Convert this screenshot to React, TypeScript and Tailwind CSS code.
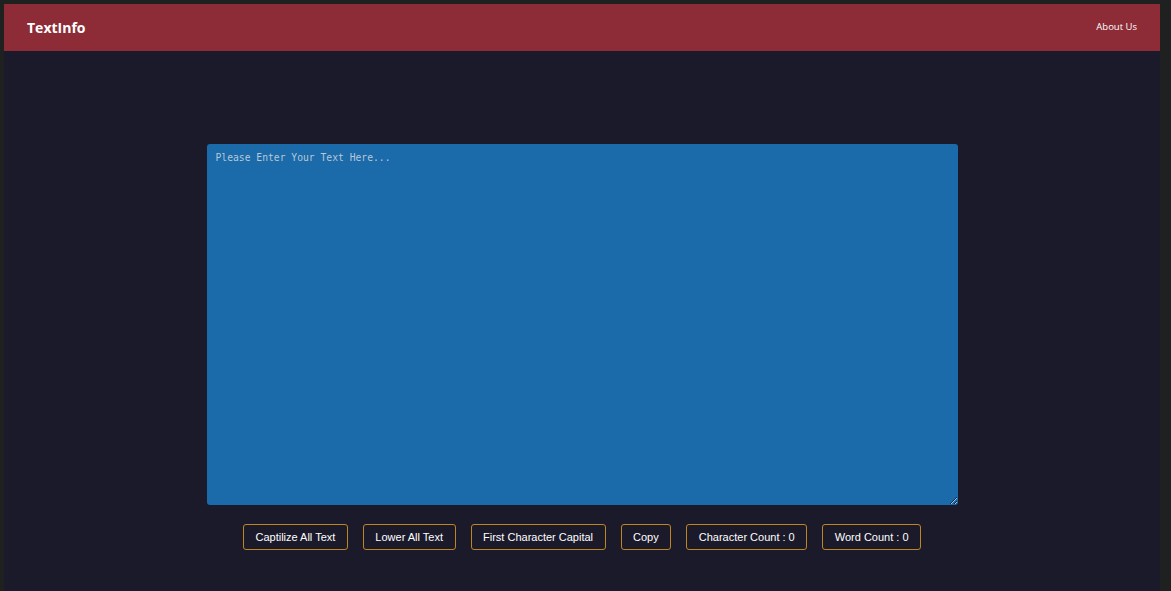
import { useState } from 'react';

export default function App() {
  const [text, setText] = useState('');

  const words = text.split(/\s+/).filter((w) => w.length > 0).length;

  const buttons = [
    'Captilize All Text',
    'Lower All Text',
    'First Character Capital',
    'Copy',
    `Character Count : ${text.length}`,
    `Word Count : ${words}`,
  ];

  return (
    <div className="h-[591px] w-full bg-[#1f2020] pl-[4px] pt-[4px] pr-[11px]">
      <div className="flex h-full flex-col bg-[#1b1a2a]">
        <nav className="flex h-[47px] items-center justify-between bg-[#8d2c37] pl-[23px] pr-[23px]">
          <span className="font-['Open_Sans',sans-serif] text-[14px] font-bold text-white">TextInfo</span>
          <span className="font-['Open_Sans',sans-serif] text-[9.5px] text-white">About Us</span>
        </nav>
        <div className="flex flex-col items-center pt-[93px]">
          <textarea
            value={text}
            onChange={(e) => setText(e.target.value)}
            placeholder="Please Enter Your Text Here..."
            className="h-[361px] w-[751px] resize-y rounded-[3px] bg-[#1b6aa9] px-[9px] py-[7px] font-['DejaVu_Sans_Mono',monospace] text-[9.7px] text-white outline-none placeholder:text-[#b9c8d6]"
          />
          <div className="mt-[19px] flex gap-[15px]">
            {buttons.map((b) => (
              <button
                key={b}
                className="h-[26px] rounded-[3px] border-[1.5px] border-[#c0851f] px-[11.5px] font-['Liberation_Sans',Arial,sans-serif] text-[11px] text-white"
              >
                {b}
              </button>
            ))}
          </div>
        </div>
      </div>
    </div>
  );
}
